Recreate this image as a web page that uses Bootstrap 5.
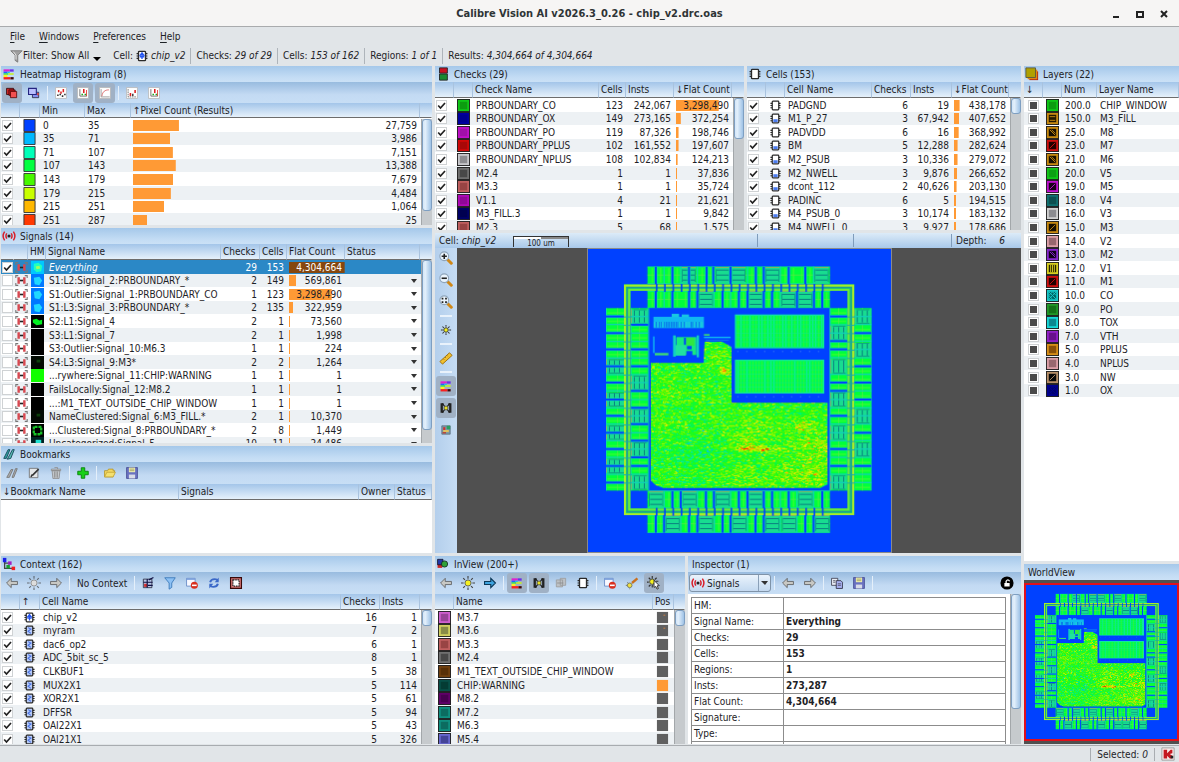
<!DOCTYPE html>
<html lang="en">
<head>
<meta charset="utf-8">
<meta name="viewport" content="width=device-width, initial-scale=1">
<title>Calibre Vision AI v2026.3_0.26 - chip_v2.drc.oas</title>
<link href="https://cdn.jsdelivr.net/npm/bootstrap@5.3.0/dist/css/bootstrap.min.css" rel="stylesheet">
<style>
:root{--ink:#1d2226;--stripe:#edf1f4;--orange:#ff9a35;--shell:#e1e5e8}
body{font-family:"DejaVu Sans Condensed","DejaVu Sans",sans-serif;font-size:10px;line-height:13px;color:var(--ink);background:var(--shell);overflow:hidden}
.app-title{height:27px;background:#f6f5f4;border-bottom:1px solid #a9abad;font-size:11px;font-weight:bold;color:#2e3436}
.win-btns{right:5px;top:4px}
.win-btns .btn{width:20px;height:18px}
.btn{--bs-btn-font-size:10px;--bs-btn-padding-x:0px;--bs-btn-padding-y:0px;--bs-btn-line-height:13px;--bs-btn-border-width:0px;--bs-btn-border-radius:3px;--bs-btn-color:var(--ink)}
.ico{width:14px;height:14px;display:block;flex:none}
.menu-row{height:18px;gap:14px;padding-left:10px}
.menu-row u{text-underline-offset:2px}
.info-row{height:21px;padding-left:9px;white-space:nowrap}
.info-row .vline{width:1px;height:16px;background:#aeb4ba;margin:0 5px}
.info-cell{margin-left:12px;gap:2px}
.dock{padding-left:1px;gap:3px;display:grid;grid-template-columns:minmax(0,431fr) minmax(0,586fr) minmax(0,155fr);flex:1 1 0;min-height:0}
.dock-col{display:grid;gap:3px;min-height:0}
.col-left{grid-template-rows:minmax(0,159fr) minmax(0,215fr) minmax(0,107fr) minmax(0,188fr)}
.col-mid{grid-template-rows:minmax(0,164fr) minmax(0,320fr) minmax(0,188fr)}
.col-right{grid-template-rows:minmax(0,495fr) minmax(0,180fr)}
.pair{display:grid;gap:3px;min-height:0}
.pair-top{grid-template-columns:minmax(0,309fr) minmax(0,274fr)}
.pair-bottom{grid-template-columns:minmax(0,250fr) minmax(0,333fr)}
.panel{display:flex;flex-direction:column;min-height:0;min-width:0;overflow:hidden;background:#fff}
.panel-title{height:16px;flex:none;gap:4px;padding-left:1px;font-size:10px;line-height:13px;font-weight:400;background:linear-gradient(#a5c8ea,#c3dcf4 70%,#cbe1f6)}
.tools{height:22px;flex:none;gap:2px;padding-left:1px;background:linear-gradient(#98bbdf,#c3daf3 60%,#c7def5)}
.tools.snug{height:21px}
.tools .btn{width:20px;height:20px;display:flex;align-items:center;justify-content:center}
.btn.on{background:#a0b1c5}
.tools .sep{width:3px;height:14px;background:linear-gradient(90deg,transparent 1px,#e4effa 1px,#e4effa 2px,transparent 2px)}
.panel-body{position:relative;flex:1 1 0;min-height:0;overflow:hidden}
.dt{table-layout:fixed;margin:0;color:var(--ink);white-space:nowrap;border-collapse:separate;border-spacing:0}
.dt>:not(caption)>*>*{padding:0 3px;border:0;box-shadow:none;background-color:transparent;overflow:hidden;line-height:13px;vertical-align:middle;color:inherit}
.dt>thead>tr>th{height:16px;font-weight:400;border-right:1px solid #a9c3df;border-bottom:1px solid #6d6d6d;background:linear-gradient(#a3c5e9,#e6f1fb);padding:0 2px;overflow:visible}
.snug+.panel-body .dt>thead>tr>th{height:15px}
.dt>thead>tr>th.bare{border-right-color:transparent}
.dt>tbody>tr>*{height:14px;font-weight:400}
.dt>tbody>tr:nth-child(5n+2)>*,.dt>tbody>tr:nth-child(5n+4)>*{height:13px}
.dt>tbody>tr:nth-child(even)>*{background-color:var(--stripe)}
.dt>tbody>tr.picked>*{background-color:#2b88c6;color:#fff}
.dt>tbody>tr>.tight{padding:0 1px}
.dt>tbody>tr>.bar{background-image:linear-gradient(var(--bar,var(--orange)),var(--bar,var(--orange)));background-repeat:no-repeat;background-size:var(--w) 11px;background-position:2px center}
.picked{--bar:#85470f}
.dt .ico,.swatch{width:13px;height:13px;display:block}
.tick{appearance:none;display:block;width:11px;height:11px;margin:0;border:1px solid #cfd2d4;background:#fff center/9px 9px no-repeat}
.tick:checked{background-image:url("data:image/svg+xml,%3Csvg xmlns='http://www.w3.org/2000/svg' viewBox='0 0 9 9'%3E%3Cpath d='M1.200 4.500 3.500 7 8 2' fill='none' stroke='%23222' stroke-width='1.700'/%3E%3C/svg%3E")}
.tick.mixed{background-image:linear-gradient(#4a4a4a,#4a4a4a);background-size:7px 7px}
.drop{width:9px;height:12px;display:block;margin-left:auto}
.scroller{position:absolute;right:0;top:16px;bottom:0;width:11px;background:#c6cacd;border-left:1px solid #a3a7aa}
.thumb{background:linear-gradient(90deg,#d4e6f8,#e2effb 30%,#9ec2e6);border:1px solid #7e9fc2;border-radius:3px}
.view-bar{height:15px;flex:none;background:linear-gradient(#dcebf8,#a9c9ea)}
.view-bar span.seg{border-left:1px solid #7f9cbb}
.ruler{left:78px;top:3px;width:56px;height:11px;border:1px solid #333;border-width:0 1px;font-size:8px;line-height:11px;background:linear-gradient(90deg,#fff 50%,#888 50%) 0 0/100% 3px no-repeat;box-shadow:inset 0 1px #333}
.ruler span{display:block;padding-top:2px}
.side-tools{width:22px;flex:none;gap:2px;background:linear-gradient(90deg,#b4cfec,#c5dcf4);display:flex;flex-direction:column;align-items:center}
.side-tools .btn{width:20px;height:20px;display:flex;align-items:center;justify-content:center}
.side-tools .sep{width:12px;height:4px;background:linear-gradient(transparent 1px,#e9f2fb 1px,#e9f2fb 3px,transparent 3px)}
.stage{background:#505050;min-width:0;min-height:0;flex:1 1 0;display:flex;justify-content:center;align-items:center}
.stage canvas{height:100%;max-width:100%;aspect-ratio:1;border:1px solid #8a8a8a}
.mini canvas{height:calc(100% - 6px);width:100%;aspect-ratio:auto;border:2px solid #e0101c}
.pick-box{width:82px;height:18px}
.pick-box select{width:100%;height:18px;appearance:none;border:1px solid #7f93a8;border-radius:3px;padding:0 14px 0 17px;font-size:10px;line-height:13px;color:var(--ink);background:linear-gradient(#eaf3fc,#c3d9f0)}
.pick-box .ico{left:2px;top:2px}
.pick-box .drop-part{right:1px;top:1px;width:12px;height:16px;border-left:1px solid #8aa0b8;pointer-events:none}
.facts{border-collapse:collapse;width:calc(100% - 18px);margin:3px 0 0 3px;table-layout:fixed}
.facts th,.facts td{border:1px solid #8c8c8c;height:16px;padding:0 2px;line-height:13px;font-weight:400}
.facts td{font-weight:bold}
.status-row{height:17px;flex:none;border-top:1px solid #a8acb0;margin-top:1px;padding-right:4px;gap:6px}
.status-row .vline{width:1px;height:13px;background:#a9adb1}
</style>
</head>
<body>
<svg width="0" height="0" class="position-absolute" aria-hidden="true">
<defs>
<symbol id="heat" viewBox="-1 -1 18 18"><path fill="#e020d0" d="M1 2h8v3H1z"/><path fill="#6a30e8" d="M9 2h5v3H9z"/><path fill="#2460ff" d="M1 5h5v2H1z"/><path fill="#10c8f0" d="M6 5h3v2H6z"/><path fill="#28e060" d="M1 7h6v2H1z"/><path fill="#c8f020" d="M7 7h7v2H7z"/><path fill="#fff020" d="M1 9h5v3H1z"/><path fill="#f82020" d="M1 12h9v3H1z"/><path fill="#400808" d="M10 12h4v3h-4z"/></symbol>
<symbol id="funnel" viewBox="0 0 16 16"><path fill="#a0a0a0" stroke="#777" d="M2 2h13l-5 5v8l-3-2V7z"/><path d="M5 3l3 4v5" stroke="#eee" fill="none"/></symbol>
<symbol id="funnelb" viewBox="0 0 16 16"><path fill="#8cc0f4" stroke="#3978b8" d="M2 2h12L10 8v5l-3 2V8z"/></symbol>
<symbol id="chip" viewBox="-1 -1 18 18"><path d="M1 5h14M1 8h14M1 11h14" stroke="#2a2a2a" stroke-width="1.500"/><rect x="3.500" y="2" width="9" height="12" rx="1" fill="#fff" stroke="#2a2a2a" stroke-width="1.700"/></symbol>
<symbol id="chipb" viewBox="-1 -1 18 18"><path d="M1 5h14M1 8h14M1 11h14" stroke="#2a2a2a" stroke-width="1.500"/><rect x="3.500" y="2" width="9" height="12" rx="1" fill="#fff" stroke="#2a2a2a" stroke-width="1.700"/><path fill="#4a7bee" d="M5 9h6v4H5z"/></symbol>
<symbol id="chipf" viewBox="-1 -1 18 18"><path d="M1 5h14M1 8h14M1 11h14" stroke="#2a2a2a" stroke-width="1.500"/><rect x="3.500" y="2" width="9" height="12" rx="1" fill="#b9ccf7" stroke="#2a2a2a" stroke-width="1.700"/><path d="M6 4l4 2-4 3 4 3" stroke="#4a74e4" stroke-width="1.500" fill="none"/></symbol>
<symbol id="chipup" viewBox="-1 -1 18 18"><path d="M1 5h14M1 8h14M1 11h14" stroke="#2a2a2a" stroke-width="1.500"/><rect x="3.500" y="2" width="9" height="12" rx="1" fill="#fff" stroke="#2a2a2a" stroke-width="1.700"/><path d="M8 4v8M5 8l3-4 3 4M5 9h6" stroke="#2455f0" stroke-width="1.800" fill="none"/></symbol>
<symbol id="redsq" viewBox="-1 -1 18 18"><path fill="#d02828" stroke="#2a0000" d="M1 2h9v8H1z"/><path fill="#c01818" stroke="#400" d="M4 4h8v7H4z"/><path fill="#f25050" stroke="#500" d="M6 6h8v8H6z"/></symbol>
<symbol id="bluesq" viewBox="-1 -1 18 18"><path fill="#8890f0" stroke="#223" d="M6 7h8v7H6z"/><path fill="#e04038" d="M12 8h2v3h-2z"/><path fill="#b9befc" stroke="#242480" stroke-width="1.400" d="M1 2h10v8H1z"/></symbol>
<symbol id="plot" viewBox="-1 -1 18 18"><path fill="#fff" stroke="#b5b5b5" d="M1 1h14v14H1z"/><path stroke="#555" fill="none" d="M3 3v10h11" stroke-dasharray="2 1"/><path fill="#d22" d="M5 8h2v4H5zM11 4h2v4h-2z"/><path fill="#444" d="M8 9h2v3H8z"/></symbol>
<symbol id="plotdots" viewBox="-1 -1 18 18"><path fill="#fff" stroke="#b5b5b5" d="M1 1h14v14H1z"/><path fill="#d22" d="M4 4h2v3H4zM7 6h2v3H7zM10 3h2v4h-2z"/><path fill="#333" d="M3 10h2v2H3zM6 9h2v2H6zM9 11h2v2H9zM12 9h2v2h-2z"/></symbol>
<symbol id="plot2" viewBox="-1 -1 18 18"><path fill="#fff" stroke="#b5b5b5" d="M1 1h14v14H1z"/><path stroke="#555" fill="none" d="M4 3v9h9"/><path fill="#d22" d="M8 3h2v5H8zM12 4h1v8h-1z"/><path fill="#2a2" d="M6 9h2v2H6zM10 9h2v2h-2z"/></symbol>
<symbol id="curve" viewBox="-1 -1 18 18"><path fill="#fff" stroke="#b5b5b5" d="M1 1h14v14H1z"/><path stroke="#888" fill="none" d="M3 3v10h11"/><path stroke="#d25050" fill="none" d="M4 12C5 6 8 4 13 4"/></symbol>
<symbol id="signal" viewBox="0 0 16 16"><circle cx="8" cy="8" r="1.800" fill="#222"/><path d="M5.500 5q-2 3 0 6M10.500 5q2 3 0 6M3 3q-3.500 5 0 10M13 3q3.500 5 0 10" fill="none" stroke="#d8202c" stroke-width="1.700"/></symbol>
<symbol id="rowsig" viewBox="0 0 16 16"><path d="M1 5V2h3M12 2h3v3M15 11v3h-3M4 14H1v-3" fill="none" stroke="#777" stroke-width="1.300"/><path fill="#d84850" d="M3 4h3v8H3zM10 4h3v8h-3z"/><path fill="#222" d="M6 7h4v2H6z"/></symbol>
<symbol id="mark" viewBox="0 0 16 16"><path fill="#2fa0a0" stroke="#145" d="M2 13L7 3h2L5 13z"/><path fill="#58b8b0" stroke="#145" d="M6 14l6-11h2L10 13z"/></symbol>
<symbol id="markg" viewBox="0 0 16 16"><path fill="#aaa" stroke="#777" d="M2 13L7 4h2L5 13zM8 13l4-10h2l-4 10z"/></symbol>
<symbol id="edit" viewBox="-1 -1 18 18"><path fill="#e4e6e8" stroke="#666" d="M2 2h11v12H2z"/><path d="M6 11L14 3M4 13l2-3" stroke="#333" stroke-width="2"/></symbol>
<symbol id="trash" viewBox="-1 -1 18 18"><path fill="#c8ccd0" stroke="#888" d="M3 5h10l-1 10H4zM2 3h12v2H2zM6 1h4v2"/><path stroke="#888" d="M6 6v8M8 6v8M10 6v8"/></symbol>
<symbol id="plus" viewBox="0 0 16 16"><path fill="#18d018" stroke="#088008" d="M6 2h4v4h4v4h-4v4H6v-4H2V6h4z"/></symbol>
<symbol id="folder" viewBox="-1 -1 18 18"><path fill="#f4d860" stroke="#b09020" d="M1 13V5h4l1-2h6v2h2l-2 8z"/><path fill="#f4e070" stroke="#c0a030" d="M1 13l3-6h11l-3 6z"/></symbol>
<symbol id="disk" viewBox="-1 -1 18 18"><path fill="#6a72c0" stroke="#434a90" d="M1 1h14v14H1z"/><path fill="#f0f0b0" d="M4 1h8v6H4z"/><path fill="#d8dce8" d="M4 10h8v5H4z"/><path stroke="#9a9a60" d="M5 3h6M5 5h6"/></symbol>
<symbol id="tree" viewBox="0 0 16 16"><path stroke="#444" fill="none" d="M3 4v9h9M3 7h6" stroke-width="1.500"/><path fill="#1b20e8" d="M1 1h4v5H1z"/><path fill="#a020c0" d="M7 5h4v4H7z"/><path fill="#18a030" d="M5 9h4v4H5z"/><path fill="#f02020" d="M11 11h4v4h-4z"/></symbol>
<symbol id="back" viewBox="-1 -1 18 18"><path fill="#c8c8c4" stroke="#555" d="M1 8l6-6v4h8v4H7v4z"/></symbol>
<symbol id="fwd" viewBox="-1 -1 18 18"><path fill="#c8c8c4" stroke="#555" d="M15 8L9 2v4H1v4h8v4z"/></symbol>
<symbol id="fwdb" viewBox="-1 -1 18 18"><path fill="#3ea4e0" stroke="#0c3858" stroke-width="1.400" d="M15 8L9 2v4H1v4h8v4z"/></symbol>
<symbol id="rays" viewBox="0 0 16 16"><path stroke="#444" stroke-width="1.300" d="M8 0v3M8 13v3M0 8h3M13 8h3M2.500 2.500l2 2M11.500 11.500l2 2M13.500 2.500l-2 2M4.500 11.500l-2 2"/></symbol>
<symbol id="sun" viewBox="0 0 16 16"><use href="#rays"/><circle cx="8" cy="8" r="3.500" fill="#f4f020" stroke="#555" /></symbol>
<symbol id="sunsm" viewBox="-3 -3 22 22"><path stroke="#333" stroke-width="1.600" d="M8 0v3M8 13v3M0 8h3M13 8h3M2.500 2.500l2 2M11.500 11.500l2 2M13.500 2.500l-2 2M4.500 11.500l-2 2"/><circle cx="8" cy="8" r="3.500" fill="#f4f020" stroke="#333" stroke-width="1.500"/></symbol>
<symbol id="sung" viewBox="0 0 16 16"><use href="#rays" opacity=".7"/><circle cx="8" cy="8" r="3.500" fill="#ddd" stroke="#888"/></symbol>
<symbol id="sunhit" viewBox="0 0 16 16"><path stroke="#333" stroke-width="1.300" d="M6 0v3M6 10v3M0 7h2M10 6h3M2 2l2 2M11 2l-2 2M4 10l-2 2"/><circle cx="6" cy="6.500" r="3" fill="#f4f020" stroke="#444"/><path fill="#fff" stroke="#222" d="M8 5l6 6-2.500.3 1.500 3-1.500.7-1.500-3L8 13z"/></symbol>
<symbol id="ctx" viewBox="-1 -1 18 18"><path fill="#b8c8e8" stroke="#223" d="M2 3h11v11H2z"/><path fill="#d43030" d="M3 9h4v4H3z"/><path stroke="#114" stroke-width="1.500" d="M2 7h12M7 3v11M8 11h6M9 4l6-3"/></symbol>
<symbol id="stop" viewBox="-1 -1 18 18"><path fill="#f8f8ff" stroke="#5a80c0" d="M1 2h11v10H1z"/><path fill="#7aa0dd" d="M1 2h11v2H1z"/><circle cx="11" cy="11" r="4.500" fill="#d83020"/><path fill="#fff" d="M8 10h6v2H8z"/></symbol>
<symbol id="refresh" viewBox="-1 -1 18 18"><path d="M3 7q1-4 6-4 3 0 4 2M13 9q-1 4-6 4-3 0-4-2" fill="none" stroke="#3a68c8" stroke-width="2.500"/><path fill="#3a68c8" d="M14 1v6H9zM2 15V9h5z"/></symbol>
<symbol id="frame" viewBox="-1 -1 18 18"><path fill="#d87878" stroke="#3a0808" stroke-width="1.500" d="M1 1h14v14H1z"/><path fill="#fff" stroke="#222" stroke-dasharray="2 1" stroke-width="1.500" d="M4 4h8v8H4z"/></symbol>
<symbol id="lights" viewBox="-1 0 16 16"><path fill="#c81020" stroke="#222" d="M3 1h9v6H3z"/><path fill="#188830" stroke="#222" d="M3 8h9v7H3z"/></symbol>
<symbol id="layers" viewBox="0 0 16 16"><path fill="#b02010" d="M5 5h10v10H5z"/><path fill="#e08810" d="M3 3h11v11H3z"/><path fill="#b0a000" stroke="#554" d="M1 1h11v11H1z"/></symbol>
<symbol id="zin" viewBox="0 0 16 16"><path d="M10 10l4 4" stroke="#d08818" stroke-width="3.500" stroke-linecap="round"/><circle cx="6" cy="6" r="5" fill="#eaf4fd" stroke="#8fa5bb" stroke-width="1.300"/><path stroke="#222" stroke-width="1.800" d="M3 6h6M6 3v6"/></symbol>
<symbol id="zout" viewBox="0 0 16 16"><path d="M10 10l4 4" stroke="#d08818" stroke-width="3.500" stroke-linecap="round"/><circle cx="6" cy="6" r="5" fill="#eaf4fd" stroke="#8fa5bb" stroke-width="1.300"/><path stroke="#222" stroke-width="1.800" d="M3 6h6"/></symbol>
<symbol id="zfit" viewBox="0 0 16 16"><path d="M10 10l4 4" stroke="#d08818" stroke-width="3.500" stroke-linecap="round"/><circle cx="6" cy="6" r="5" fill="#eaf4fd" stroke="#8fa5bb" stroke-width="1.300"/><path fill="#222" d="M3 3h2v2H3zM7 3h2v2H7zM3 7h2v2H3zM7 7h2v2H7z"/></symbol>
<symbol id="rule" viewBox="0 0 16 16"><path fill="#f0c030" stroke="#986808" d="M1 12L12 2l3 3L4 15z"/><path stroke="#986808" d="M5 9l1 1M7 7l1 1M9 5l1 1"/></symbol>
<symbol id="hsun" viewBox="-1 -1 18 18"><path fill="#222" d="M1 2h4v2H4v8h1v2H1zM15 2h-4v2h1v8h-1v2h4z"/><path stroke="#222" stroke-width="1.500" d="M3 2l10 12M13 2L3 14"/><circle cx="8" cy="8" r="2.500" fill="#e8e020" stroke="#554"/></symbol>
<symbol id="mix" viewBox="-2 -2 20 20"><path fill="#7c98a8" stroke="#567" d="M2 2h12v12H2z"/><path fill="#e0c060" d="M4 8h8v3H4z"/><path fill="#28a060" d="M9 2h5v5H9z"/><path fill="#d03030" d="M4 4h3v4H4z"/><path fill="#c04030" d="M3 11h5v2H3z"/></symbol>
<symbol id="cards" viewBox="-1 -1 18 18"><path fill="#bcc0c4" stroke="#999" d="M2 4h8v9H2zM7 2h7v9H7z"/><path stroke="#888" d="M3 8h8"/></symbol>
<symbol id="broom" viewBox="-1 -1 18 18"><path stroke="#c87020" stroke-width="3" d="M8 8l7-6"/><circle cx="5" cy="11" r="3" fill="#f0e040" stroke="#665"/><path stroke="#665" d="M0 11h2M5 15v1M2 7l1 1"/></symbol>
<symbol id="shapes" viewBox="0 0 18 18"><path fill="#c82828" d="M2 9h6v5H2z"/><path fill="#2438a8" stroke="#112" d="M2 3h7v7H2z"/><circle cx="11" cy="9" r="4" fill="#30a038" stroke="#122"/></symbol>
<symbol id="copy" viewBox="-1 -1 18 18"><path fill="#e8ecf4" stroke="#334" d="M1 2h8v9H1z"/><path fill="#a8b0f0" stroke="#223" d="M7 5h6l2 2v8H7z"/><path stroke="#445" d="M3 5h3M3 7h3M9 9h4M9 11h4"/></symbol>
<symbol id="lock" viewBox="0 0 16 16"><circle cx="8" cy="8" r="7.500"/><path fill="#fff" d="M5 8h6v4H5z"/><path stroke="#fff" stroke-width="1.500" fill="none" d="M7 8V6q2-3 4 0"/></symbol>
<symbol id="alert" viewBox="0 0 16 16"><path fill="#f8eaea" stroke="#999" d="M1 1h14v14H1z"/><path fill="#c41820" d="M3 3h4v4l4-4h2v4l-3 1 3 2v3h-3L7 10v3H3z"/><path fill="#222" d="M11 10h3v3h-3z"/></symbol>
</defs>
</svg>

<div class="vh-100 d-flex flex-column">
<header class="app-title position-relative d-flex align-items-center justify-content-center flex-shrink-0">
<span>Calibre Vision AI v2026.3_0.26 - chip_v2.drc.oas</span>
<div class="win-btns position-absolute d-flex gap-1">
<button class="btn" aria-label="Minimize"><svg width="10" height="10"><path d="M2 8h6" stroke="#222" stroke-width="2"/></svg></button>
<button class="btn" aria-label="Maximize"><svg width="10" height="10"><path d="M2 3h6v5H2z" stroke="#222" stroke-width="2" fill="none"/></svg></button>
<button class="btn" aria-label="Close"><svg width="10" height="10"><path d="M2 2l6 6M8 2l-6 6" stroke="#222" stroke-width="2"/></svg></button>
</div>
</header>
<nav class="menu-row d-flex align-items-center flex-shrink-0">
<button class="btn"><u>F</u>ile</button><button class="btn"><u>W</u>indows</button><button class="btn"><u>P</u>references</button><button class="btn"><u>H</u>elp</button>
</nav>
<div class="info-row d-flex align-items-center flex-shrink-0">
<button class="btn d-flex align-items-center"><svg class="ico"><use href="#funnel"/></svg>Filter: Show All<svg class="ms-1 mt-1" width="8" height="13"><path d="M0 6h8l-4 4z"/></svg></button>
<span class="info-cell d-flex align-items-center">Cell:<svg class="ico"><use href="#chipup"/></svg><i>chip_v2</i></span><span class="vline"></span>
<span>Checks: <i>29 of 29</i></span><span class="vline"></span>
<span>Cells: <i>153 of 162</i></span><span class="vline"></span>
<span>Regions: <i>1 of 1</i></span><span class="vline"></span>
<span>Results: <i>4,304,664 of 4,304,664</i></span>
</div>

<main class="dock">
<div class="dock-col col-left">
<section class="panel"><h2 class="panel-title d-flex align-items-center m-0"><svg class="ico"><use href="#heat"/></svg>Heatmap Histogram (8)</h2>
<div class="tools snug d-flex align-items-center" data-tools="redsq* bluesq | plotdots plot2* curve* | plot plot2"></div>
<div class="panel-body" id="histogram"></div></section>
<section class="panel"><h2 class="panel-title d-flex align-items-center m-0"><svg class="ico"><use href="#signal"/></svg>Signals (14)</h2>
<div class="panel-body" id="signals"></div></section>
<section class="panel"><h2 class="panel-title d-flex align-items-center m-0"><svg class="ico"><use href="#mark"/></svg>Bookmarks</h2>
<div class="tools d-flex align-items-center" data-tools="markg edit trash | plus | folder disk"></div>
<div class="panel-body" id="bookmarks"></div></section>
<section class="panel"><h2 class="panel-title d-flex align-items-center m-0"><svg class="ico"><use href="#tree"/></svg>Context (162)</h2>
<div class="tools d-flex align-items-center" data-tools="back sung fwd | No_Context | ctx funnelb stop refresh frame"></div>
<div class="panel-body" id="context"></div></section>
</div>

<div class="dock-col col-mid">
<div class="pair pair-top">
<section class="panel"><h2 class="panel-title d-flex align-items-center m-0"><svg class="ico"><use href="#lights"/></svg>Checks (29)</h2><div class="panel-body" id="checks"></div></section>
<section class="panel"><h2 class="panel-title d-flex align-items-center m-0"><svg class="ico"><use href="#chip"/></svg>Cells (153)</h2><div class="panel-body" id="cells"></div></section>
</div>
<section class="panel">
<div class="view-bar position-relative d-flex align-items-center ps-1 pe-2"><span>Cell: <i>chip_v2</i></span>
<div class="ruler position-absolute text-center"><span>100 um</span></div>
<div class="d-flex ms-auto"><span class="seg" style="width:96px">&nbsp;</span><span class="seg" style="width:98px">&nbsp;</span><span class="seg d-flex justify-content-between px-1" style="width:62px"><span>Depth:</span><i class="pe-1">6</i></span></div></div>
<div class="d-flex flex-fill" style="min-height:0">
<div class="side-tools" data-tools="zin zout zfit | sunsm | rule | heat* hsun* mix"></div>
<div class="stage"><canvas id="chipmap" width="304" height="304" role="img" aria-label="Layout heatmap"></canvas></div>
</div></section>
<div class="pair pair-bottom">
<section class="panel"><h2 class="panel-title d-flex align-items-center m-0"><svg class="ico"><use href="#shapes"/></svg>InView (200+)</h2>
<div class="tools d-flex align-items-center" data-tools="back sun fwdb | heat* hsun* cards chip | stop broom sunhit*"></div>
<div class="panel-body" id="inview"></div></section>
<section class="panel"><h2 class="panel-title d-flex align-items-center m-0 ps-1">Inspector (1)</h2>
<div class="tools d-flex align-items-center pe-1">
<div class="pick-box position-relative"><svg class="ico position-absolute"><use href="#signal"/></svg><select aria-label="Inspect"><option>Signals</option></select><span class="drop-part position-absolute"><svg width="11" height="16"><path d="M2 6h7l-3 4z" fill="#333"/></svg></span></div>
<div class="d-flex align-items-center flex-fill" style="gap:2px" data-tools="| back fwd | copy disk |"></div>
<button class="btn" aria-label="Lock"><svg class="ico"><use href="#lock"/></svg></button></div>
<div class="panel-body"><table class="facts" id="facts"><colgroup><col style="width:92px"><col></colgroup></table>
<div class="scroller" style="top:0"><div class="thumb" style="height:115px"></div></div></div></section>
</div>
</div>

<div class="dock-col col-right">
<section class="panel"><h2 class="panel-title d-flex align-items-center m-0"><svg class="ico"><use href="#layers"/></svg>Layers (22)</h2><div class="panel-body" id="layerlist"></div></section>
<section class="panel"><h2 class="panel-title d-flex align-items-center m-0 ps-1">WorldView</h2><div class="stage mini"><canvas id="world" width="304" height="304" role="img" aria-label="Whole chip"></canvas></div></section>
</div>
</main>
<footer class="status-row d-flex align-items-center justify-content-end"><span class="vline"></span><span>Selected: <i>0</i></span><span class="vline"></span><svg class="ico"><use href="#alert"/></svg></footer>
</div>

<script src="https://cdn.jsdelivr.net/npm/bootstrap@5.3.0/dist/js/bootstrap.bundle.min.js"></script>
<script>
const icon = n => `<svg class="ico"><use href="#${n}"/></svg>`;
const tick = (label, on = true, cls = '') => `<input class="tick ${cls}" type="checkbox" aria-label="${label}" ${on ? 'checked' : ''}>`;
const num = s => +String(s).replace(/,/g, '');
const share = v => `--w:${Math.max(1.8, num(v) / 4304664 * 96).toFixed(1)}%`;

/* A colour chip: dark rim, bright frame, darker core with an optional hatch. */
function swatch(frame, core, hatch) {
  const marks = {
    fall: 'M4 4l6 6M6 4l4 4', rise: 'M4 10l6-6', bars: 'M4 5h6M4 9h6',
    dots: 'M5 3v8M7 3v8M9 3v8', mesh: 'M3 3l8 8M3 7l4 4M7 3l4 4M11 3l-8 8M7 3l-4 4'
  };
  return `<svg class="swatch" viewBox="0 0 14 14"><path fill="#222" d="M0 0h14v14H0z"/><path fill="${frame}" d="M1 1h12v12H1z"/><path fill="${core}" d="M3 3h8v8H3z"/>` +
    (hatch ? `<path d="${marks[hatch]}" stroke="${frame}" fill="none"/>` : '') + '</svg>';
}

/* cols: [width, heading, cell class]; an empty width takes what is left. */
function table(id, cols, rows, thumb, picked = -1) {
  const head = cols.map(c => `<th class="${c[1] || c[3] ? '' : 'bare'}">${c[1]}</th>`).join('');
  const body = rows.map((r, i) => `<tr${i === picked ? ' class="picked"' : ''}>` + cols.map((c, k) => {
    const v = r[k] ?? '';
    return Array.isArray(v) ? `<td class="${c[2]}" style="${v[1]}">${v[0]}</td>` : `<td class="${c[2] || ''}">${v}</td>`;
  }).join('') + '</tr>').join('');
  document.getElementById(id).innerHTML =
    `<table class="table dt"><colgroup>${cols.map(c => `<col${c[0] ? ` style="width:${c[0]}px"` : ''}>`).join('')}</colgroup><thead><tr>${head}</tr></thead><tbody>${body}</tbody></table>` +
    (thumb ? `<div class="scroller"><div class="thumb" style="height:${thumb}px"></div></div>` : '');
}

document.querySelectorAll('[data-tools]').forEach(bar => {
  bar.innerHTML = bar.dataset.tools.split(' ').map(t => {
    if (t === '|') return '<span class="sep"></span>';
    if (t.includes('_')) return `<span class="px-1">${t.replace('_', ' ')}</span>`;
    const on = t.endsWith('*'), n = t.replace('*', '');
    return `<button class="btn ${on ? 'on' : ''}" aria-label="${n}">${icon(n)}</button>`;
  }).join('');
});

const plain = c => `<svg class="swatch" viewBox="0 0 14 14"><path fill="${c}" stroke="#333" d="M1 0.500h12v13H1z"/></svg>`;
table('histogram', [[19, '', 'tight', 1], [20, '', '', 1], [45, 'Min'], [46, 'Max'], ['', '↑Pixel Count (Results)', 'bar text-end'], [12, '']],
  [['#0041ff', 0, 35, '27,759'], ['#00b8ff', 35, 71, '3,986'], ['#00ffb8', 71, 107, '7,151'], ['#00ff40', 107, 143, '13,388'],
   ['#48f800', 143, 179, '7,679'], ['#c8ff00', 179, 215, '4,484'], ['#ffb800', 215, 251, '1,064'], ['#ff3800', 251, 287, '25']]
  .map(r => [tick(r[1] + ' to ' + r[2]), plain(r[0]), r[1], r[2], [r[3], `--w:${(Math.log10(num(r[3])) * 3.58).toFixed(1)}%`]]), 92);

const thumbs = {
  all: '<path fill="#00c8ff" d="M0 0h14v14H0z"/><path fill="#20ffc0" d="M3 3l5-1 4 3-1 6-5 1-3-3z"/><path fill="#a0ff60" d="M5 6l4-1 1 3-4 1z"/>',
  blue: '<path fill="#0078ff" d="M0 0h14v14H0z"/><path fill="#20d8ff" d="M3 4l6-1 3 4-3 5-5-1z"/>',
  leaf: '<path d="M0 0h14v14H0z"/><path fill="#00f020" d="M2 5l4-1 3 2 3-1 0 5-6 1-4-3z"/>',
  dark: '<path d="M0 0h14v14H0z"/>',
  dim: '<path fill="#020a02" d="M0 0h14v14H0z"/><path fill="#0a400a" d="M6 4h4v3H6z"/>',
  lime: '<path fill="#10ff00" d="M0 0h14v14H0z"/>',
  ring: '<path d="M0 0h14v14H0z"/><path d="M4 3h6v1h1v6h-1v1H4v-1H3V4h1z" fill="none" stroke="#18c028" stroke-width="2.500" stroke-dasharray="3 1"/>',
  teal: '<path fill="#022" d="M0 0h14v14H0z"/><path fill="#20e0d0" d="M5 3h6v9H5z"/>'
};
const hm = k => `<svg class="swatch" viewBox="0 0 14 14">${thumbs[k]}</svg>`;
table('signals', [[13, '', 'tight'], [14, '', 'tight', 1], [18, 'HM'], [175, 'Signal Name'], [39, 'Checks', 'text-end'], [27, 'Cells', 'text-end'], [58, 'Flat Count', 'bar text-end'], ['', 'Status', 'tight'], [12, '']],
  [['all', '<i>Everything</i>', 29, 153, '4,304,664'], ['blue', 'S1:L2:Signal_2:PRBOUNDARY_*', 2, 149, '569,861'],
   ['blue', 'S1:Outlier:Signal_1:PRBOUNDARY_CO', 1, 123, '3,298,490'], ['blue', 'S1:L3:Signal_3:PRBOUNDARY_*', 2, 135, '322,959'],
   ['leaf', 'S2:L1:Signal_4', 2, 1, '73,560'], ['dark', 'S3:L1:Signal_7', 2, 1, '1,998'], ['dark', 'S3:Outlier:Signal_10:M6.3', 1, 1, '224'],
   ['dim', 'S4:L3:Signal_9:M3*', 2, 2, '1,264'], ['lime', '...rywhere:Signal_11:CHIP:WARNING', 1, 1, '1'], ['dark', 'FailsLocally:Signal_12:M8.2', 1, 1, '1'],
   ['dark', '...:M1_TEXT_OUTSIDE_CHIP_WINDOW', 1, 1, '1'], ['dim', 'NameClustered:Signal_6:M3_FILL.*', 2, 1, '10,370'],
   ['ring', '...Clustered:Signal_8:PRBOUNDARY_*', 2, 8, '1,449'], ['teal', 'Uncategorized:Signal_5', 10, 11, '24,486']]
  .map((r, i) => [tick(r[1].replace(/<.*?>/g, ''), !i), icon('rowsig'), hm(r[0]), r[1], r[2], r[3], [r[4], share(r[4])],
    i ? '<svg class="drop" viewBox="0 0 9 12"><path d="M1 4h6L4 8z" fill="#333"/></svg>' : '']), 170, 0);

table('bookmarks', [[178, '↓Bookmark Name'], ['', 'Signals'], [36, 'Owner'], [37, 'Status']], [], 0);

table('context', [[19, '', 'tight', 1], [20, '↑'], ['', 'Cell Name'], [39, 'Checks', 'text-end'], [40, 'Insts', 'text-end'], [12, '']],
  [['chip_v2', 16, 1], ['myram', 7, 2], ['dac6_op2', 6, 1], ['ADC_5bit_sc_5', 8, 1], ['CLKBUF1', 5, 38], ['MUX2X1', 5, 114], ['XOR2X1', 5, 61], ['DFFSR', 5, 94], ['OAI22X1', 5, 43], ['OAI21X1', 5, 326]]
  .map((r, i) => [tick(r[0]), icon(i ? 'chipf' : 'chipup'), ...r]), 16);

table('checks', [[19, '', 'tight', 1], [19, '', '', 1], ['', 'Check Name'], [27, 'Cells', 'text-end'], [48, 'Insts', 'text-end'], [58, '↓Flat Count', 'bar text-end'], [12, '']],
  [['#10c818', '#0c9c10', 'PRBOUNDARY_CO', 123, '242,067', '3,298,490'], ['#0000a0', '#000090', 'PRBOUNDARY_OX', 149, '273,165', '372,254'],
   ['#c010c8', '#a010a8', 'PRBOUNDARY_PO', 119, '87,326', '198,746'], ['#d00808', '#a80808', 'PRBOUNDARY_PPLUS', 102, '161,552', '197,607'],
   ['#c8c8cc', '#8c8c90', 'PRBOUNDARY_NPLUS', 108, '102,834', '124,213'], ['#707070', '#484848', 'M2.4', 1, 1, '37,836'],
   ['#c06060', '#984444', 'M3.3', 1, 1, '35,724'], ['#b008b8', '#900898', 'V1.1', 4, 21, '21,621'], ['#000068', '#000050', 'M3_FILL.3', 1, 1, '9,842'], ['#c06060', '#984444', 'M2.3', 5, 68, '1,575']]
  .map(r => [tick(r[2]), swatch(r[0], r[1]), r[2], r[3], r[4], [r[5], share(r[5])]]), 41);

table('cells', [[19, '', 'tight', 1], [19, '', '', 1], ['', 'Cell Name'], [39, 'Checks', 'text-end'], [41, 'Insts', 'text-end'], [57, '↓Flat Count', 'bar text-end'], [12, '']],
  [['PADGND', 6, '19', '438,178'], ['M1_P_27', 3, '67,942', '407,652'], ['PADVDD', 6, '16', '368,992'], ['BM', 5, '12,288', '282,624'], ['M2_PSUB', 3, '10,336', '279,072'],
   ['M2_NWELL', 3, '9,876', '266,652'], ['dcont_112', 2, '40,626', '203,130'], ['PADINC', 6, '5', '194,515'], ['M4_PSUB_0', 3, '10,174', '183,132'], ['M4_NWELL_0', 3, '9,927', '178,686']]
  .map(r => [tick(r[0]), icon(r[1] === 6 ? 'chip' : 'chipb'), r[0], r[1], r[2], [r[3], share(r[3])]]), 16);

table('layerlist', [[19, '↓', 'tight'], [19, '', '', 1], [35, 'Num'], ['', 'Layer Name']],
  [['200.0', 'CHIP_WINDOW', '#10c818', '#0c9c10'], ['150.0', 'M3_FILL', '#c88a10', '#241800', 'bars'], ['25.0', 'M8', '#c88a10', '#180f00', 'fall'], ['23.0', 'M7', '#d01010', '#200', 'rise'],
   ['21.0', 'M6', '#c88a10', '#180f00', 'fall'], ['20.0', 'V5', '#10c818', '#0ca014'], ['19.0', 'M5', '#c010d0', '#180018', 'rise'], ['18.0', 'V4', '#107070', '#0c5050'],
   ['16.0', 'V3', '#d0d0d0', '#8c8c90'], ['15.0', 'M3', '#c88a10', '#180f00', 'rise'], ['14.0', 'V2', '#dca0a8', '#98686f'], ['13.0', 'M2', '#8828d0', '#100018', 'fall'],
   ['12.0', 'V1', '#d8d020', '#282400', 'dots'], ['11.0', 'M1', '#d01010', '#200', 'rise'], ['10.0', 'CO', '#18c8c8', '#066', 'mesh'], ['9.0', 'PO', '#209828', '#147018'],
   ['8.0', 'TOX', '#18d8d8', '#0c8890'], ['7.0', 'VTH', '#9020c8', '#68108c'], ['5.0', 'PPLUS', '#d89018', '#885008'], ['4.0', 'NPLUS', '#dca0a8', '#98686f'], ['3.0', 'NW', '#b89068', '#080808', 'rise'], ['1.0', 'OX', '#000090', '#000070', 'mesh']]
  .map(r => [tick(r[1], false, 'mixed mx-auto'), swatch(r[2], r[3], r[4]), r[0], r[1]]), 0);

const pos = (c, d) => `<svg class="swatch" viewBox="0 0 14 14"><path fill="${c}" d="M1 1h12v12H1z"/>${d}</svg>`;
table('inview', [[19, '', '', 1], ['', 'Name'], [21, 'Pos'], [11, '']],
  [['M3.7', '#d060d0', '#984498'], ['M3.6', '#d0d060', '#888c48'], ['M3.3', '#c06060', '#984444'], ['M2.4', '#707070', '#484848'], ['M1_TEXT_OUTSIDE_CHIP_WINDOW', '#704010', '#583008'],
   ['CHIP:WARNING', '#085048', '#043c34'], ['M8.2', '#600068', '#480050'], ['M7.2', '#109080', '#0c6c60'], ['M6.3', '#109080', '#0c6c60'], ['M5.4', '#6868d0', '#444498']]
  .map((r, i) => [swatch(r[1], r[2]), r[0], pos(i === 5 ? '#ff9a35' : '#606060', i < 2 ? '<path fill="#d08040" d="M8 4h2v1H8z"/>' : '')]), 16);

document.getElementById('facts').insertAdjacentHTML('beforeend', '<tbody>' +
  [['HM', ''], ['Signal Name', 'Everything'], ['Checks', 29], ['Cells', 153], ['Regions', 1], ['Insts', '273,287'], ['Flat Count', '4,304,664'], ['Signature', ''], ['Type', ''], ['Identifier', '']]
  .map(r => `<tr><th scope="row">${r[0]}:</th><td>${r[1]}</td></tr>`).join('') + '</tbody>');

/* The die heatmap, drawn on a 912-unit grid, three units to a pixel. */
function drawDie(cv) {
  const g = cv.getContext('2d');
  let seed = 7;
  const rnd = () => (seed = (seed * 16807) % 2147483647) / 2147483647;
  const box = (c, x, y, w, h) => { g.fillStyle = c; g.fillRect(x, y, w, h); };
  const BLUE = '#0041ff', GREEN = '#00ff3c', CYAN = '#10e0a8', DARK = '#0a8080', LIME = '#a8ee28';
  box(BLUE, 0, 0, 304, 304);
  g.setTransform(1 / 3, 0, 0, 1 / 3, -2, -1);

  /* One strip of pads; `flip` runs it down the page instead of across. */
  function strip(flip, across, depth, cuts, seams, busy) {
    const b = (c, a, d, w, h) => flip ? box(c, d, a, h, w) : box(c, a, d, w, h);
    const start = flip ? 181 : 185, len = 549;
    b(GREEN, start, across, len, depth);
    b(CYAN, start, across, len, 2); b(CYAN, start, across + depth - 2, len, 2);
    for (let t = start + 12; t < start + len - 8; t += 25) b('rgba(110,250,40,.4)', t, across + 4, 5, depth - 8);
    b('rgba(90,230,70,.8)', start, across + depth / 2 - 2, len, 3);
    busy.forEach(p => {
      b('#18dc90', p, across + 2, 42, depth - 4);
      for (let k = 9; k < depth - 6; k += 15) b(DARK, p + 3, across + k, 36, 3);
      b('#b8a058', p, across + 1, 42, 2);
      b(DARK, p, across + 8, 2, depth - 14); b(DARK, p + 40, across + 8, 2, depth - 14);
    });
    seams.forEach(c => b('#10d0b8', c - 2, across, 4, depth));
    cuts.forEach(c => { b(CYAN, c - 5, across, 10, depth); b(BLUE, c - 3, across, 6, depth); });
  }
  strip(0, 56, 52, [210, 260, 310, 363, 383, 435, 511, 535, 610, 660], [235, 285, 335, 486, 585, 685], [288, 390, 438, 540, 688]);
  strip(0, 129, 52, [210, 260, 310, 335, 411, 460, 486, 535, 560, 635, 686, 711], [235, 385, 435, 585], [340, 490, 588, 638]);
  strip(0, 731, 52, [260, 285, 361, 385, 460, 486, 535, 560, 610, 711], [235, 335, 435, 585, 635, 685], [190, 290, 390, 490, 640]);
  strip(0, 804, 53, [210, 235, 310, 335, 411, 435, 510, 535, 660, 685], [285, 386, 486, 585, 635], [240, 340, 440, 540, 590, 690]);
  strip(1, 60, 71, [206, 256, 305, 356, 405, 456, 505, 556, 605, 656, 706], [230, 281, 331, 381, 430, 481, 530, 580, 630, 681], [335, 435, 535, 635]);
  strip(1, 135, 53, [231, 305, 356, 430, 481, 530, 580, 630, 656], [206, 256, 281, 331, 381, 405, 456, 505, 556, 605, 681, 706], [185, 385, 485, 585, 685]);
  strip(1, 735, 52, [206, 280, 305, 405, 430, 505, 605, 656], [231, 256, 330, 380, 456, 481, 530, 556, 580, 630, 681, 706], [235, 335, 435, 535, 685]);
  strip(1, 806, 53, [256, 356, 405, 456, 556, 656], [206, 230, 280, 305, 330, 380, 430, 481, 505, 530, 580, 605, 630, 681, 706], [185, 285, 485, 585]);

  /* Seal ring: two lime rails with a green channel between them. */
  g.strokeStyle = '#18d070'; g.lineWidth = 20; g.strokeRect(124, 119, 674, 675);
  g.strokeStyle = '#2090a0'; g.lineWidth = 3; g.strokeRect(124, 119, 674, 675);
  g.strokeStyle = LIME; g.lineWidth = 6; g.strokeRect(117, 113, 687, 688);
  g.strokeStyle = '#70ec38'; g.lineWidth = 6; g.strokeRect(130, 126, 660, 661);
  for (let p = 210; p < 720; p += 25) {
    box(BLUE, p, 108, 5, 24); box(BLUE, p, 782, 5, 24);
    box('#18a8b0', 113, p - 4, 24, 3); box('#18a8b0', 785, p - 4, 24, 3);
  }

  box(BLUE, 188, 181, 547, 549);
  box(CYAN, 188, 181, 2, 549); box(CYAN, 733, 181, 2, 549); box(CYAN, 188, 729, 547, 2);

  /* Memory blocks. */
  [200, 336].forEach(y => {
    box('#10e8a0', 448, y, 269, 102);
    box('#00fa50', 452, y + 4, 261, 94);
    for (let x = 456; x < 712; x += 9) box(rnd() > .6 ? '#10e8a0' : '#28f838', x, y + 4, 3, 94);
    for (let k = 16; k < 94; k += 13) box('rgba(20,230,140,.55)', 452, y + k, 261, 3);
    for (let x = 455; x < 712; x += 27) box('#3878f0', x, y + 110, 4, 3);
  });

  /* Analog corner. */
  box('#10b8f0', 203, 207, 152, 34); box('#18c8e0', 258, 198, 22, 10); box('#18c8e0', 288, 200, 22, 8);
  for (let x = 205; x < 352; x += 5) box(rnd() > .4 ? '#0860e8' : '#20d8d0', x, 222, 2, 17);
  box('#10c0f0', 202, 266, 4, 50); box('#40e070', 207, 316, 41, 7);
  box('#10d0c0', 262, 263, 8, 64); box('#10d0c0', 333, 263, 7, 66);
  box('#18e880', 272, 268, 60, 54); box(BLUE, 295, 270, 6, 22); box(BLUE, 304, 295, 14, 10); box(BLUE, 302, 310, 18, 14);
  box('#20e0a0', 270, 292, 30, 32); box('#30e840', 302, 270, 24, 24);
  box('#10c0f0', 355, 267, 80, 4); box('#40d870', 355, 259, 17, 5); box('#1070f0', 360, 276, 70, 3);

  /* Standard-cell area: run-length noise warmed by a few hot spots. */
  g.save();
  g.beginPath();
  [[195, 346], [354, 346], [357, 282], [410, 282], [438, 298], [438, 466], [727, 466], [727, 712], [705, 722], [232, 722], [210, 714], [195, 700]].forEach(p => g.lineTo(...p));
  g.clip();
  const hot = [[413, 370, 14, 12, .42], [400, 330, 35, 30, .08], [510, 603, 75, 7, .3], [475, 585, 25, 26, .16], [655, 533, 26, 14, .22], [685, 590, 55, 55, .15], [250, 430, 45, 45, .08],
    [500, 550, 110, 60, .08], [480, 690, 90, 30, .09], [660, 680, 80, 40, .14], [230, 540, 60, 40, .07], [330, 620, 120, 90, -.06]];
  const ramp = ['#00c8d8', '#08e8a0', '#00f470', '#08fa40', '#20fc18', '#40fa08', '#78f800', '#b0f400', '#e8e800', '#ffb400', '#ff7000', '#f02800'];
  for (let y = 282; y < 723; y += 3) {
    const band = (rnd() - .5) * .07;
    for (let x = 195; x < 728;) {
      const w = 3 + 3 * Math.floor(rnd() * 3);
      let v = .39 + band + (rnd() + rnd() - 1) * .3;
      const k = .5 + rnd();
      hot.forEach(h => { v += k * h[4] * Math.exp(-(((x - h[0]) / h[2]) ** 2) - ((y - h[1]) / h[3]) ** 2); });
      box(ramp[Math.max(0, Math.min(11, Math.floor(v * 12)))], x, y, w, 3);
      x += w;
    }
  }
  g.restore();
}
const dieMap = document.getElementById('chipmap');
drawDie(dieMap);
document.getElementById('world').getContext('2d').drawImage(dieMap, 0, 0);
</script>
</body>
</html>
